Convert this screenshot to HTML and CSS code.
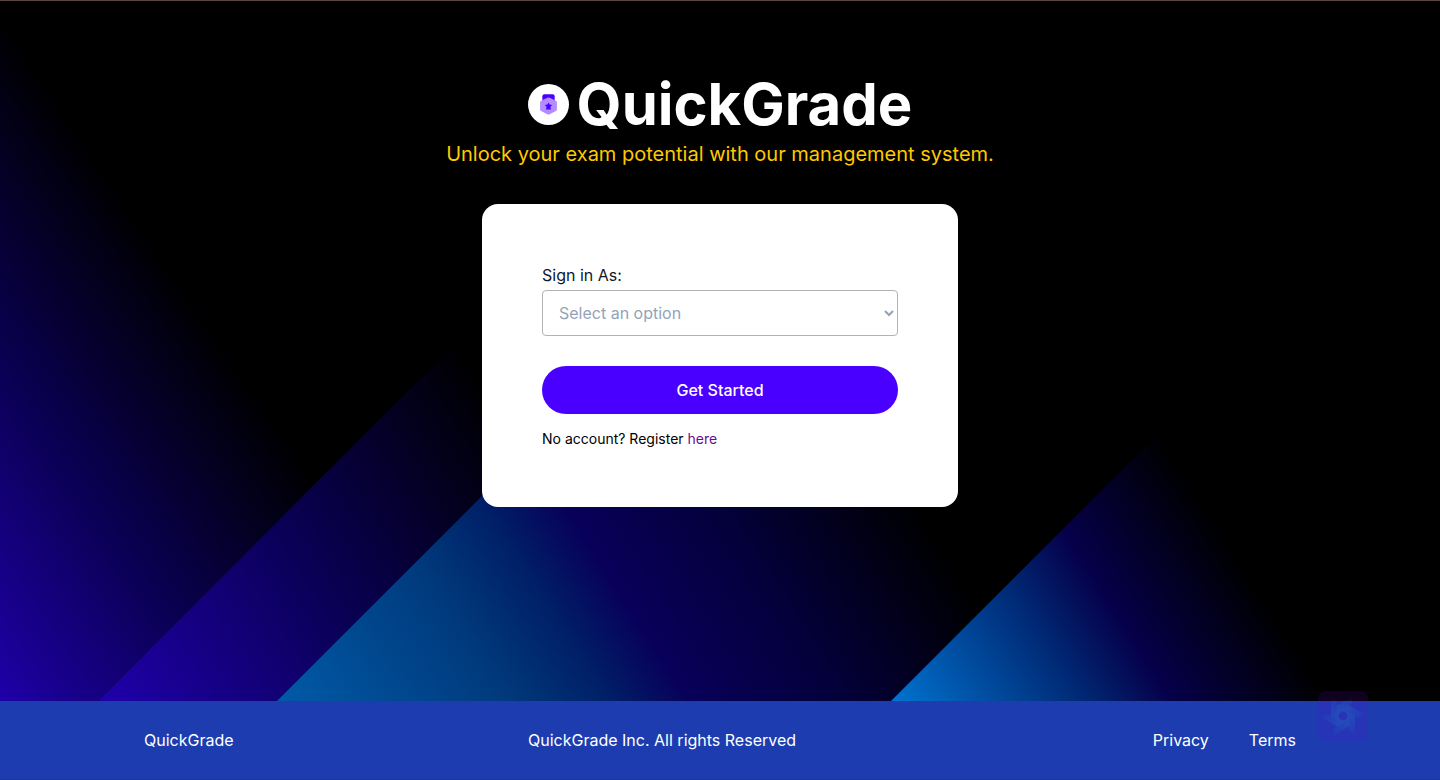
FILE: index.html
```html
<!DOCTYPE html>
<html lang="en">
<head>
<meta charset="utf-8">
<meta name="viewport" content="width=device-width, initial-scale=1">
<title>QuickGrade</title>
<link rel="stylesheet" href="styles.css">
</head>
<body>
<main class="hero">
  <svg class="hero-art" viewBox="0 0 1440 700" preserveAspectRatio="xMidYMax slice" aria-hidden="true">
    <defs>
      <linearGradient id="beam-a" gradientUnits="userSpaceOnUse" x1="0" y1="700" x2="320" y2="484">
        <stop offset="0" stop-color="#1f00a8"/><stop offset=".5" stop-color="#0a0052"/><stop offset="1" stop-color="#000"/>
      </linearGradient>
      <linearGradient id="beam-b" gradientUnits="userSpaceOnUse" x1="98" y1="700" x2="518" y2="432">
        <stop offset="0" stop-color="#2000ac"/><stop offset=".5" stop-color="#0a0056"/><stop offset="1" stop-color="#000"/>
      </linearGradient>
      <linearGradient id="beam-c" gradientUnits="userSpaceOnUse" x1="277" y1="700" x2="820" y2="351">
        <stop offset="0" stop-color="#005aa8"/><stop offset=".3" stop-color="#003a7c"/><stop offset=".43" stop-color="#002068"/><stop offset=".54" stop-color="#08005a"/><stop offset=".75" stop-color="#040038"/><stop offset="1" stop-color="#000"/>
      </linearGradient>
      <linearGradient id="beam-d" gradientUnits="userSpaceOnUse" x1="891" y1="700" x2="1203" y2="500">
        <stop offset="0" stop-color="#0074d0"/><stop offset=".42" stop-color="#002c78"/><stop offset=".64" stop-color="#06004a"/><stop offset="1" stop-color="#000"/>
      </linearGradient>
    </defs>
    <path fill="#000" d="M0 0H1440V700H0z"/>
    <path fill="url(#beam-a)" d="M0 0H798L98 700H0z"/>
    <path fill="url(#beam-b)" d="M98 700L798 0H1440V700z"/>
    <path fill="url(#beam-c)" d="M277 700L977 0H1440V700z"/>
    <path fill="url(#beam-d)" d="M891 700L1440 151V700z"/>
  </svg>

  <header class="brand">
    <h1 class="brand-name">
      <svg class="brand-mark" viewBox="0 0 40 40" aria-hidden="true">
        <circle cx="20" cy="20" r="20" fill="#fff"/>
        <path fill="#4a00ff" d="M14 17V12q0-2 2-2h8q2 0 2 2v5z"/>
        <path fill="#b38cff" d="M18.800 13.400q1.200-.6 2.400 0l6 3q1 .5 1 1.500v7q0 1-1 1.500l-6 3q-1.200.6-2.400 0l-6-3q-1-.5-1-1.500v-7q0-1 1-1.500z"/>
        <path fill="#4a00ff" d="M20 18l1.100 2 2.500.4-1.700 1.800.5 2.600H17.600l.5-2.600-1.700-1.800 2.500-.4z"/>
      </svg>
      <span>QuickGrade</span>
    </h1>
    <p class="tagline">Unlock your exam potential with our management system.</p>
  </header>

  <form class="card">
    <label class="field-label" for="role">Sign in As:</label>
    <select class="field-select" id="role">
      <option>Select an option</option>
      <option>Student</option>
      <option>Teacher</option>
    </select>
    <button class="submit" type="button">Get Started</button>
    <p class="register">No account? Register <a class="register-link" href="#register">here</a></p>
  </form>
</main>

<footer class="footer">
  <span>QuickGrade</span>
  <span>QuickGrade Inc. All rights Reserved</span>
  <nav class="footer-nav">
    <a href="#privacy">Privacy</a>
    <a href="#terms">Terms</a>
  </nav>
</footer>

<div class="assistant" aria-hidden="true">
  <svg class="assistant-mark" viewBox="-20 -20 40 40">
    <defs>
      <linearGradient id="blade-fade" x1="0" y1="0" x2="0" y2="1">
        <stop offset="0" stop-color="#3c6cf0" stop-opacity=".5"/><stop offset="1" stop-color="#6cb0ff"/>
      </linearGradient>
      <path id="blade" d="M-12-18V0L-4 5V-2L-6-4V-14z"/>
    </defs>
    <g fill="url(#blade-fade)">
      <use href="#blade"/><use href="#blade" transform="rotate(60)"/><use href="#blade" transform="rotate(120)"/><use href="#blade" transform="rotate(180)"/><use href="#blade" transform="rotate(240)"/><use href="#blade" transform="rotate(300)"/>
    </g>
  </svg>
</div>
</body>
</html>
```
FILE: styles.css
```css
* {
  box-sizing: border-box;
}

body {
  margin: 0;
  min-height: 100vh;
  display: flex;
  flex-direction: column;
  background: #000;
  color: #000;
  font-family: Inter, "Liberation Sans", sans-serif;
  font-size: 16px;
  line-height: 24px;
}

.hero {
  position: relative;
  flex: 1;
  display: flex;
  flex-direction: column;
  align-items: center;
  gap: 36px;
  padding: 67px 16px 48px;
  border-top: 1px solid #5a463f;
}

.hero-art {
  position: absolute;
  inset: 0;
  z-index: -1;
  width: 100%;
  height: 100%;
}

.brand {
  text-align: center;
}

.brand-name {
  display: flex;
  align-items: center;
  justify-content: center;
  gap: 8px;
  margin: 0;
  color: #fff;
  font-size: 58px;
  font-weight: 700;
  line-height: 72px;
}

.brand-mark {
  width: 41px;
  height: 41px;
}

.tagline {
  margin: 0;
  color: #ffc800;
  font-size: 20px;
  line-height: 28px;
}

.card {
  display: flex;
  flex-direction: column;
  width: 100%;
  max-width: 476px;
  padding: 60px;
  border-radius: 16px;
  background: #fff;
}

.field-label {
  margin-bottom: 4px;
  color: #0f172a;
  line-height: 22px;
}

.field-select {
  width: 100%;
  height: 46px;
  padding: 0 0 0 12px;
  border: 1px solid #b3b3b3;
  border-radius: 4px;
  background: #fff;
  color: #94a3b8;
  font: inherit;
}

.submit {
  height: 48px;
  margin-top: 30px;
  border: 0;
  border-radius: 24px;
  background: #4a00ff;
  color: #fff;
  font: inherit;
  font-weight: 500;
}

.register {
  margin: 16px 0 0;
  font-size: 14px;
  line-height: 17px;
}

.register-link {
  color: #6a0d91;
  text-decoration: none;
}

.footer {
  display: grid;
  grid-template-columns: repeat(3, 1fr);
  align-items: center;
  padding: 27px 10%;
  border-bottom: 1px solid #1937a6;
  background: #1c3cb0;
  color: #fff;
}

.footer-nav {
  display: flex;
  justify-content: flex-end;
  gap: 40px;
}

.footer-nav a {
  color: inherit;
  text-decoration: none;
}

.assistant {
  position: fixed;
  right: 72px;
  bottom: 39px;
  display: flex;
  align-items: center;
  justify-content: center;
  width: 50px;
  height: 50px;
  border-radius: 8px;
  background: #6d0adf;
  opacity: .15;
}

.assistant-mark {
  width: 40px;
  height: 40px;
}
```
